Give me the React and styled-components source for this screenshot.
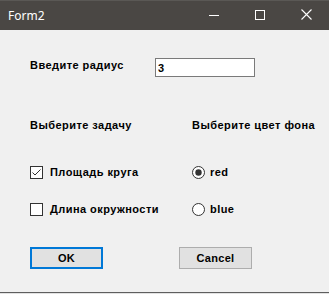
import React from "react";
import styled, { createGlobalStyle } from "styled-components";

const Global = createGlobalStyle`
  html, body { margin: 0; padding: 0; background: #f0f0f0; }
  body { width: 329px; height: 294px; overflow: hidden; }
`;

const Window = styled.div`
  width: 329px;
  height: 294px;
  box-sizing: border-box;
  display: flex;
  flex-direction: column;
  background: #f0f0f0;
  border-bottom: 1px solid #e2e2e2;
  font-family: "Liberation Sans", Arial, sans-serif;
`;

const TitleBar = styled.div`
  height: 30px;
  flex: 0 0 30px;
  box-sizing: border-box;
  display: flex;
  align-items: center;
  background: #4a4744;
  border-top: 1px solid #5a5855;
  padding-left: 8px;
`;

const Title = styled.div`
  flex: 1;
  color: #ffffff;
  font-family: "Noto Sans", "Open Sans", sans-serif;
  font-size: 12px;
  line-height: 16px;
`;

const Controls = styled.div`
  display: flex;
  height: 100%;
`;

const CtrlButton = styled.div`
  width: 46px;
  height: 100%;
  display: flex;
  align-items: center;
  justify-content: center;
  margin-top: -1px;
`;

const Content = styled.div`
  flex: 1;
  display: flex;
  flex-direction: column;
  padding: 28px 0 0 30px;
  border-bottom: 1px solid #5e5e5e;
`;

const Row = styled.div`
  display: flex;
  align-items: ${(p) => p.$align || "center"};
  margin-top: ${(p) => p.$top || 0}px;
  height: ${(p) => p.$h || 13}px;
`;

const Label = styled.div`
  width: ${(p) => (p.$w ? `${p.$w}px` : "auto")};
  margin-top: ${(p) => p.$mt || 0}px;
  font-size: 11px;
  font-weight: bold;
  letter-spacing: 0.45px;
  line-height: 13px;
  color: #000;
  white-space: nowrap;
`;

const TextBox = styled.input`
  width: 100px;
  height: 19px;
  box-sizing: border-box;
  border: 1px solid #7a7a7a;
  background: #fff;
  padding: 0 2px;
  margin: 0;
  font-family: "Liberation Sans", Arial, sans-serif;
  font-size: 11px;
  font-weight: bold;
  color: #000;
  outline: none;
`;

const Option = styled.label`
  display: flex;
  align-items: center;
  gap: ${(p) => p.$gap}px;
  width: ${(p) => (p.$w ? `${p.$w}px` : "auto")};
  height: 13px;
`;

const Button = styled.div`
  width: 73px;
  height: 22px;
  box-sizing: border-box;
  display: flex;
  align-items: center;
  justify-content: center;
  background: #e1e1e1;
  border: ${(p) => (p.$default ? "2px solid #0078d7" : "1px solid #adadad")};
  font-size: 11px;
  font-weight: bold;
  letter-spacing: 0.3px;
  color: #000;
  margin-right: ${(p) => p.$mr || 0}px;
`;

const CheckBox = ({ checked }) => (
  <svg width="13" height="13" viewBox="0 0 13 13">
    <rect x="0.5" y="0.5" width="12" height="12" fill="#fff" stroke="#333" />
    {checked && (
      <path d="M2.5 6.5 L5 9 L10.5 3.5" fill="none" stroke="#333" strokeWidth="1" />
    )}
  </svg>
);

const Radio = ({ checked }) => (
  <svg width="13" height="13" viewBox="0 0 13 13">
    <circle cx="6.5" cy="6.5" r="6" fill="#fff" stroke="#333" />
    {checked && <circle cx="6.5" cy="6.5" r="3.2" fill="#333" />}
  </svg>
);

export default function App() {
  return (
    <>
      <Global />
      <Window>
        <TitleBar>
          <Title>Form2</Title>
          <Controls>
            <CtrlButton>
              <svg width="10" height="10" viewBox="0 0 10 10">
                <path d="M0 5.5 H10" stroke="#fff" strokeWidth="1" />
              </svg>
            </CtrlButton>
            <CtrlButton>
              <svg width="10" height="10" viewBox="0 0 10 10">
                <rect x="0.5" y="0.5" width="9" height="9" fill="none" stroke="#fff" />
              </svg>
            </CtrlButton>
            <CtrlButton>
              <svg width="11" height="11" viewBox="0 0 11 11">
                <path d="M0.5 0.5 L10.5 10.5 M10.5 0.5 L0.5 10.5" stroke="#fff" strokeWidth="1.1" />
              </svg>
            </CtrlButton>
          </Controls>
        </TitleBar>
        <Content>
          <Row $h={19} $align="flex-start">
            <Label $w={125} $mt={1}>Введите радиус</Label>
            <TextBox defaultValue="3" />
          </Row>
          <Row $top={42}>
            <Label $w={162}>Выберите задачу</Label>
            <Label>Выберите цвет фона</Label>
          </Row>
          <Row $top={34}>
            <Option $gap={7} $w={162}>
              <CheckBox checked />
              <Label>Площадь круга</Label>
            </Option>
            <Option $gap={5}>
              <Radio checked />
              <Label>red</Label>
            </Option>
          </Row>
          <Row $top={24}>
            <Option $gap={7} $w={162}>
              <CheckBox />
              <Label>Длина окружности</Label>
            </Option>
            <Option $gap={5}>
              <Radio />
              <Label>blue</Label>
            </Option>
          </Row>
          <Row $top={31} $h={22}>
            <Button $default $mr={76}>OK</Button>
            <Button>Cancel</Button>
          </Row>
        </Content>
      </Window>
    </>
  );
}
